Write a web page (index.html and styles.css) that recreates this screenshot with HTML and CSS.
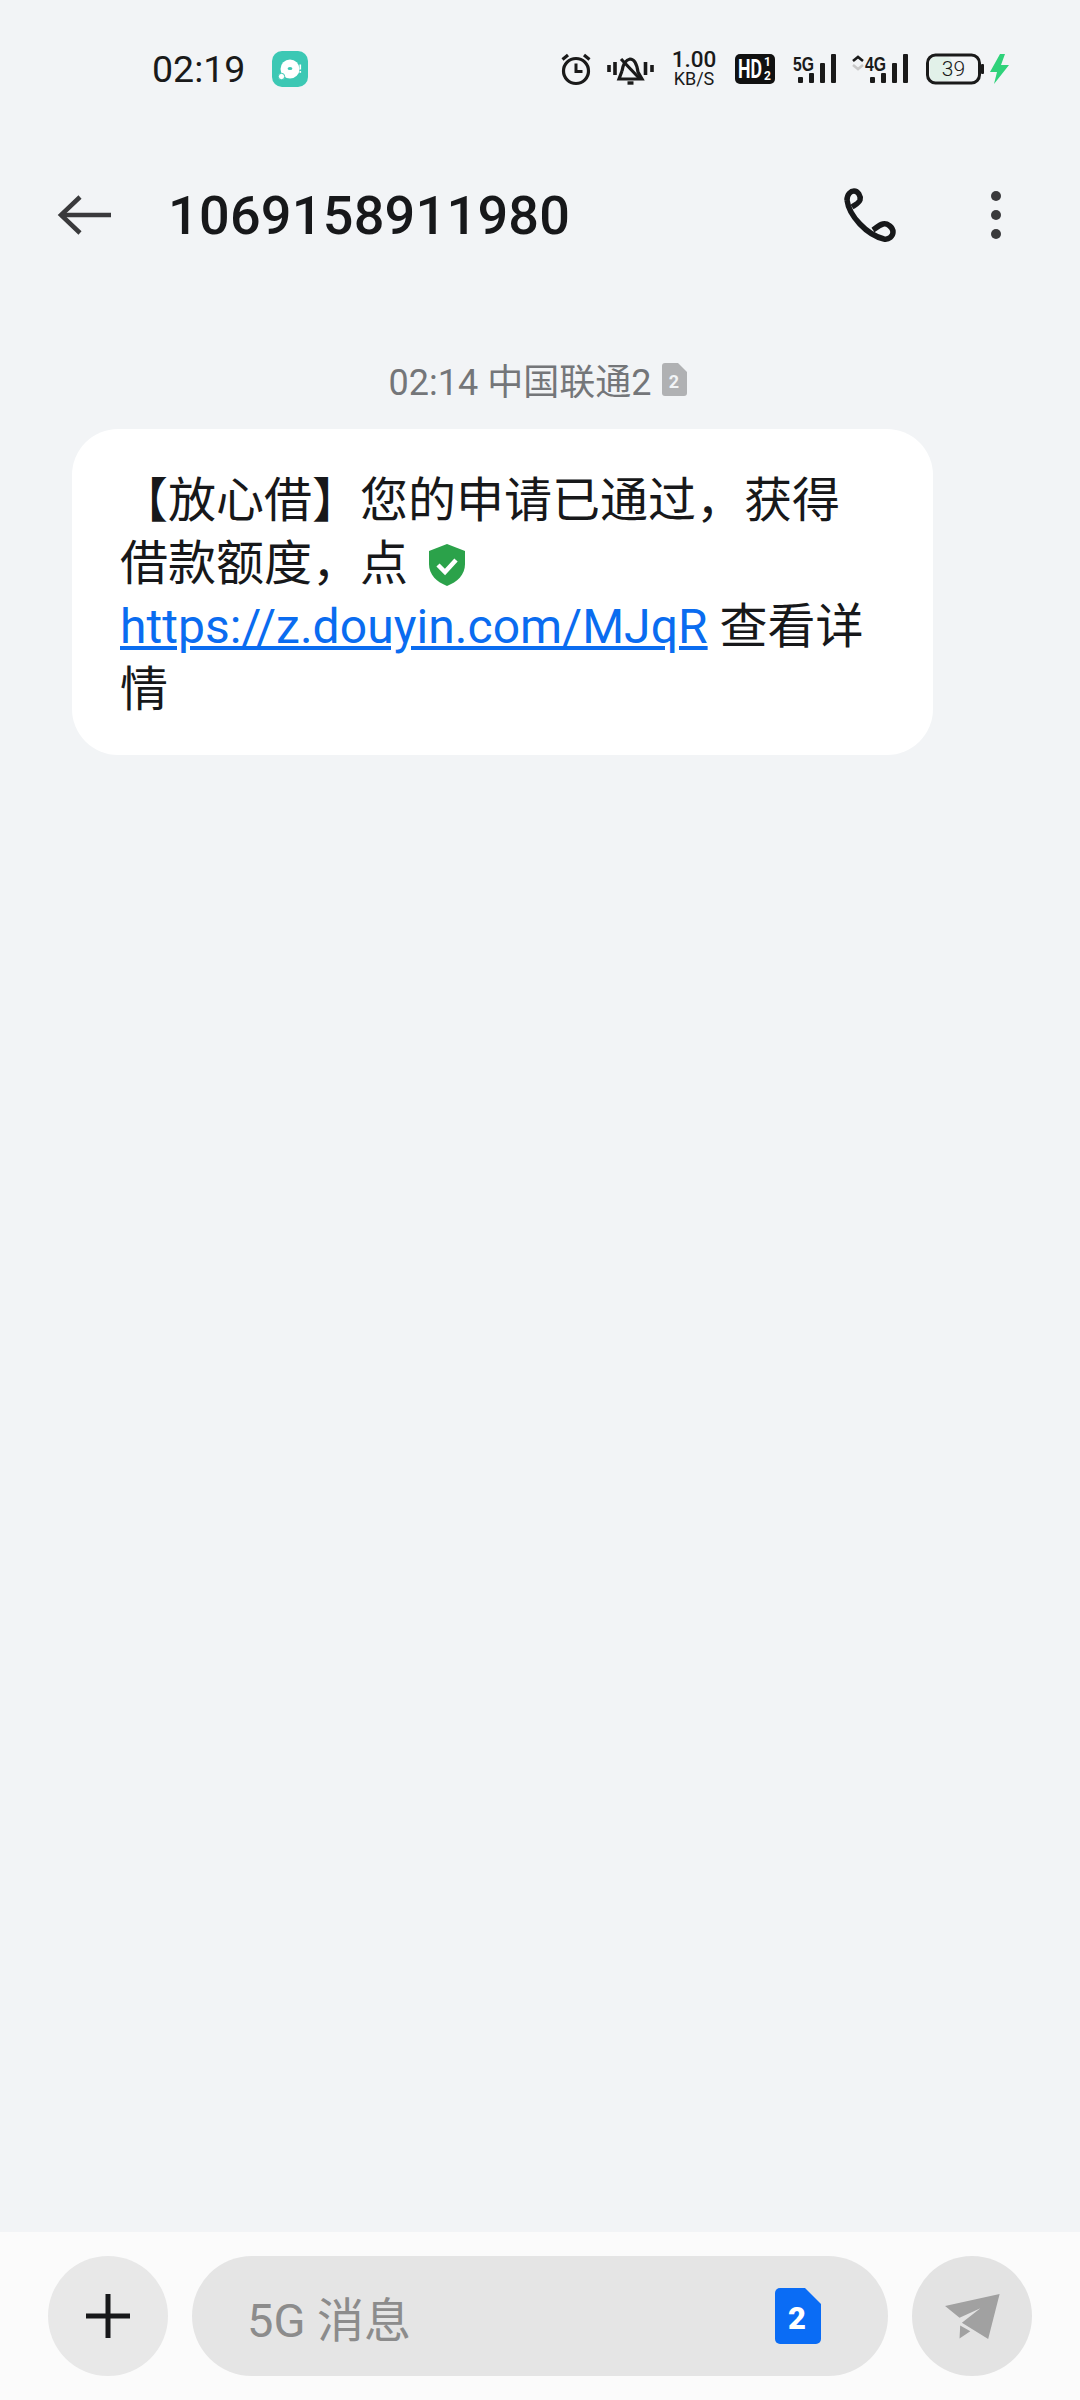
FILE: index.html
```html
<!DOCTYPE html>
<html lang="zh-CN">
<head>
    <meta charset="UTF-8">
    <meta name="viewport" content="width=device-width, initial-scale=1.0">
    <title>1069158911980</title>
    <link rel="stylesheet" href="styles.css">
</head>
<body>
    <div class="status-bar">
        <span class="clock">02:19</span>
        <svg class="app-badge" width="36" height="36" viewBox="0 0 36 36">
            <rect width="36" height="36" rx="10" fill="#3cc8b4"/>
            <circle cx="18" cy="18" r="9.5" fill="#fff"/>
            <ellipse cx="18" cy="17.5" rx="2.4" ry="1.6" fill="#3cc8b4"/>
            <circle cx="9.5" cy="25.5" r="3.2" fill="#fff" stroke="#3cc8b4" stroke-width="1"/>
            <rect x="27.5" y="13.5" width="1.6" height="5" fill="#fff"/>
            <rect x="27.5" y="20" width="1.6" height="1.8" fill="#fff"/>
        </svg>
        <div class="status-icons">
            <svg class="ic-alarm" width="32" height="34" viewBox="0 0 32 34" fill="none" stroke="#1a1a1a">
                <circle cx="16" cy="19" r="12.5" stroke-width="3.2"/>
                <path d="M16 11.5V19.5H22.5" stroke-width="3"/>
                <path d="M2.5 7.5L8 3M29.5 7.5L24 3" stroke-width="3.2"/>
            </svg>
            <svg class="ic-bell" width="47" height="32" viewBox="0 0 47 32" fill="none" stroke="#1a1a1a">
                <path d="M15 18C16 12 18 7 23 6C28 6 30 12 31 19L35 26H12L15 18" stroke-width="3.2"/>
                <path d="M14 6L33 26" stroke-width="3.2"/>
                <path d="M20.5 30H26.5" stroke-width="3.4"/>
                <path d="M2 12V19M8 9V22M38.5 9V22M45 12V19" stroke-width="3.6"/>
            </svg>
            <div class="net-speed">
                <span class="net-num">1.00</span>
                <span class="net-unit">KB/S</span>
            </div>
            <svg class="ic-hd" width="40" height="30" viewBox="0 0 40 30">
                <rect width="40" height="30" rx="5" fill="#111"/>
                <text x="3" y="24" class="hd-text" textLength="24" lengthAdjust="spacingAndGlyphs">HD</text>
                <text x="29" y="12" class="hd-small">1</text>
                <text x="29" y="26" class="hd-small">2</text>
            </svg>
            <svg class="ic-sig" width="45" height="30" viewBox="0 0 45 30">
                <text x="0" y="17" class="sig-text" textLength="21" lengthAdjust="spacingAndGlyphs">5G</text>
                <rect x="5" y="23" width="5" height="6" rx="1" fill="#1a1a1a"/>
                <rect x="16" y="19" width="5" height="10" rx="1" fill="#1a1a1a"/>
                <rect x="27" y="9" width="5" height="20" rx="1" fill="#1a1a1a"/>
                <rect x="38" y="0" width="5" height="29" rx="1" fill="#1a1a1a"/>
            </svg>
            <svg class="ic-sig" width="59" height="30" viewBox="0 0 59 30">
                <path d="M1 7L6 3L11 7" fill="none" stroke="#1a1a1a" stroke-width="2.6"/>
                <path d="M1 11L6 15L11 11" fill="none" stroke="#c9c9c9" stroke-width="2.6"/>
                <text x="13" y="17" class="sig-text" textLength="21" lengthAdjust="spacingAndGlyphs">4G</text>
                <rect x="18" y="23" width="5" height="6" rx="1" fill="#1a1a1a"/>
                <rect x="29" y="19" width="5" height="10" rx="1" fill="#1a1a1a"/>
                <rect x="40" y="9" width="5" height="20" rx="1" fill="#1a1a1a"/>
                <rect x="51" y="0" width="5" height="29" rx="1" fill="#1a1a1a"/>
            </svg>
            <svg class="ic-batt" width="84" height="32" viewBox="0 0 84 32">
                <rect x="4" y="4" width="22" height="24" rx="5" fill="#e2f1e9"/>
                <rect x="1.5" y="2" width="52" height="28" rx="8" fill="none" stroke="#1a1a1a" stroke-width="3"/>
                <rect x="55" y="11" width="3" height="10" rx="1" fill="#1a1a1a"/>
                <text x="27.5" y="23" class="batt-text">39</text>
                <path d="M74 1L64 19H71L68 31L83 12H75L79 1Z" fill="#2fd27a"/>
            </svg>
        </div>
    </div>

    <div class="top-bar">
        <svg class="back-icon" width="54" height="40" viewBox="0 0 54 40" fill="none" stroke="#3a3a3c" stroke-width="4.5">
            <path d="M23 2L4 20L23 38"/>
            <path d="M4 20H54"/>
        </svg>
        <h1 class="title">1069158911980</h1>
        <svg class="phone-icon" width="60" height="60" viewBox="0 0 60 60" fill="none" stroke="#17181a" stroke-width="5.5" stroke-linejoin="round">
            <path d="M7 15C7 9 11 6 14 6C18 6 21 11 20 15C19 18 15 20 12 22"/>
            <path d="M7 15C9 31 27 50 44 54C49 55 53 51 53 47C53 42 47 38 43 39C39 40 36 43 33 45"/>
        </svg>
        <div class="more-icon"><i></i><i></i><i></i></div>
    </div>

    <main class="thread">
        <div class="msg-meta">
            <span>02:14 中国联通2</span>
            <svg class="sim-small" width="25" height="33" viewBox="0 0 25 33">
                <path d="M3 0H16L25 9V30A3 3 0 0 1 22 33H3A3 3 0 0 1 0 30V3A3 3 0 0 1 3 0Z" fill="#b0b1b3"/>
                <text x="12" y="25" class="sim-small-text">2</text>
            </svg>
        </div>
        <div class="bubble">【放心借】您的申请已通过，获得借款额度，点 <svg class="shield" width="38" height="42" viewBox="0 0 38 42">
                <path d="M19 0L37 7V20C37 31 29 38 19 42C9 38 1 31 1 20V7Z" fill="#2ba24a"/>
                <path d="M10 21L17 28L28 16" fill="none" stroke="#fff" stroke-width="4.5"/>
            </svg><br><a class="link" href="#">https://z.douyin.com/MJqR</a> 查看详情</div>
    </main>

    <footer class="composer">
        <div class="plus-btn">
            <svg width="46" height="46" viewBox="0 0 46 46" stroke="#17181a" stroke-width="5">
                <path d="M23 1V45M1 23H45"/>
            </svg>
        </div>
        <div class="input-pill">
            <span class="placeholder">5G 消息</span>
            <svg class="sim-big" width="46" height="56" viewBox="0 0 46 56">
                <path d="M5 0H30L46 16V51A5 5 0 0 1 41 56H5A5 5 0 0 1 0 51V5A5 5 0 0 1 5 0Z" fill="#0a6cf5"/>
                <text x="22" y="41" class="sim-big-text">2</text>
            </svg>
        </div>
        <div class="send-btn">
            <svg width="64" height="54" viewBox="660 180 190 160" fill="#a1a1a1">
                <path d="M837 195L675 230L718 265L780 237L725 280L803 328Z"/>
                <path d="M720 288L750 305L718 327Z"/>
            </svg>
        </div>
    </footer>
</body>
</html>
```

FILE: styles.css
```css
* {
    box-sizing: border-box;
}
body {
    margin: 0;
    width: 1080px;
    height: 2400px;
    display: flex;
    flex-direction: column;
    background-color: #f2f4f6;
    color: #17181a;
    font-family: Roboto, "Noto Sans CJK SC", sans-serif;
    overflow: hidden;
}
.status-bar {
    height: 138px;
    display: flex;
    align-items: center;
    padding: 0 70px 0 152px;
}
.clock {
    font-size: 37.5px;
    width: 94px;
    color: #1a1a1a;
}
.app-badge {
    margin-left: 26px;
}
.status-icons {
    margin-left: auto;
    display: flex;
    align-items: center;
}
.ic-bell {
    margin-left: 15px;
}
.net-speed {
    margin-left: 16px;
    width: 48px;
    display: flex;
    flex-direction: column;
    align-items: center;
    color: #1a1a1a;
    font-weight: 500;
}
.net-num {
    font-size: 22.5px;
    line-height: 20px;
}
.net-unit {
    font-size: 18px;
    font-weight: 400;
    line-height: 20px;
}
.ic-hd {
    margin-left: 17px;
}
.ic-sig {
    margin-left: 18px;
    overflow: visible;
}
.ic-sig + .ic-sig {
    margin-left: 14px;
}
.ic-batt {
    margin-left: 15px;
}
.hd-text {
    font: 700 26px Roboto, sans-serif;
    fill: #fff;
}
.hd-small {
    font: 700 12px Roboto, sans-serif;
    fill: #fff;
}
.sig-text {
    font: 700 21px "Liberation Sans", sans-serif;
    fill: #1a1a1a;
}
.batt-text {
    font: 300 21px Roboto, sans-serif;
    text-anchor: middle;
    fill: #1a1a1a;
}
.top-bar {
    height: 154px;
    display: flex;
    align-items: center;
    padding-left: 57px;
}
.title {
    margin: 0 0 0 57px;
    font-size: 54px;
    font-weight: 500;
    letter-spacing: 0.25px;
}
.phone-icon {
    margin-left: auto;
}
.more-icon {
    width: 10px;
    margin: 0 79px 0 91px;
    display: flex;
    flex-direction: column;
    gap: 9px;
}
.more-icon i {
    display: block;
    width: 10px;
    height: 10px;
    border-radius: 50%;
    background-color: #3a3a3c;
}
.thread {
    flex: 1;
}
.msg-meta {
    margin-top: 67px;
    display: flex;
    align-items: center;
    justify-content: center;
    gap: 11px;
    height: 40px;
    padding-right: 4px;
    font-size: 36px;
    color: #747679;
}
.sim-small-text {
    font: 700 18px Roboto, sans-serif;
    text-anchor: middle;
    fill: #f2f4f6;
}
.bubble {
    margin: 30px 0 0 72px;
    width: 861px;
    padding: 40px 48px 34px;
    border-radius: 46px;
    background-color: #fff;
    font-size: 48px;
    line-height: 63px;
    color: #17181a;
}
.shield {
    margin-left: 8px;
    vertical-align: -6px;
}
.link {
    color: #0a6cf0;
    letter-spacing: 0.06px;
    text-decoration: underline;
}
.composer {
    height: 168px;
    display: flex;
    align-items: flex-start;
    padding: 24px 48px 0 48px;
    background-color: #fbfbfb;
}
.plus-btn {
    width: 120px;
    height: 120px;
    border-radius: 50%;
    background-color: #e8e8e8;
    display: flex;
    align-items: center;
    justify-content: center;
}
.input-pill {
    margin-left: 24px;
    width: 696px;
    height: 120px;
    border-radius: 60px;
    background-color: #e5e5e5;
    display: flex;
    align-items: center;
    padding: 0 67px 0 55px;
}
.placeholder {
    font-size: 47px;
    color: #8c8c8c;
}
.sim-big {
    margin-left: auto;
}
.sim-big-text {
    font: 900 31px Roboto, sans-serif;
    text-anchor: middle;
    fill: #fff;
}
.send-btn {
    margin-left: 24px;
    width: 120px;
    height: 120px;
    border-radius: 50%;
    background-color: #e3e3e3;
    display: flex;
    align-items: center;
    justify-content: center;
}
```
